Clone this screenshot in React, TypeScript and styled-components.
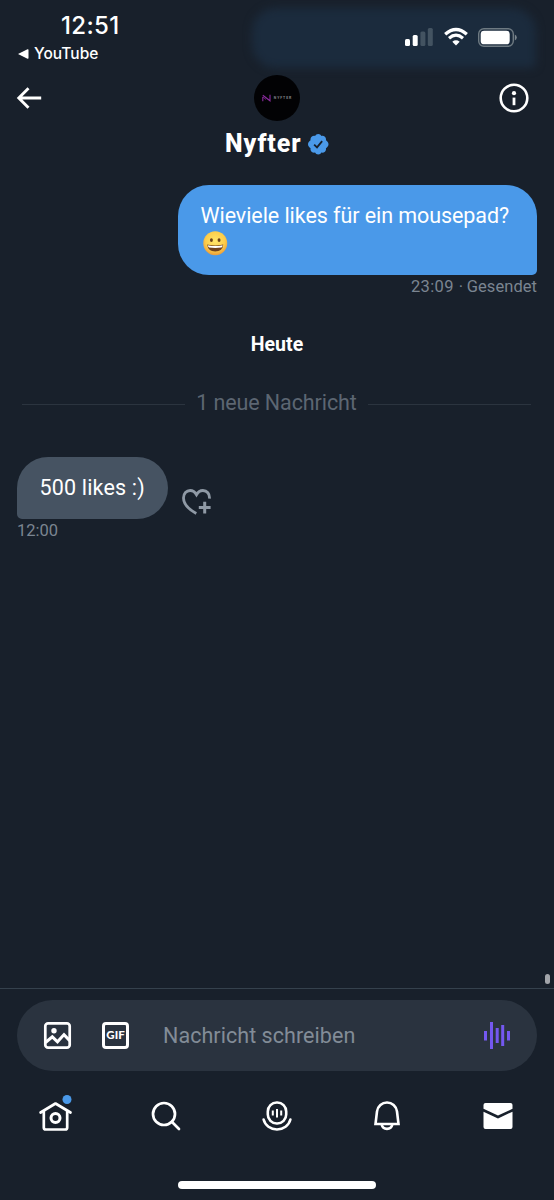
import React from "react";
import styled, { createGlobalStyle } from "styled-components";

const GlobalStyle = createGlobalStyle`
  * { box-sizing: border-box; }
  body { margin: 0; background: #18202b; }
  svg { display: block; flex: none; overflow: visible; }
`;

const Screen = styled.main`
  position: relative;
  display: flex;
  flex-direction: column;
  width: 554px;
  height: 1200px;
  overflow: hidden;
  background: #18202b;
  color: #fff;
  font-family: Roboto, "Liberation Sans", sans-serif;
`;

const Glow = styled.div`
  position: absolute;
  top: 8px;
  left: 252px;
  width: 284px;
  height: 60px;
  border-radius: 24px 24px 6px 24px;
  background: #1b2b3d;
  filter: blur(4px);
`;

const Text = styled.span<{ $size: number; $track?: number; $weight?: number; $color?: string }>`
  font-size: ${(p) => p.$size}px;
  letter-spacing: ${(p) => p.$track ?? 0}px;
  font-weight: ${(p) => p.$weight ?? 400};
  color: ${(p) => p.$color ?? "#fff"};
  white-space: nowrap;
`;

const GifLabel = styled(Text)`
  font-family: Lato, sans-serif;
  line-height: 1;
`;

const StatusBar = styled.header`
  position: relative;
  display: flex;
  justify-content: space-between;
  height: 70px;
  padding: 12px 37px 0 18px;
  font-family: Inter, sans-serif;
`;

const Clock = styled.div`
  display: flex;
  flex-direction: column;
`;

const Time = styled.div`
  height: 28px;
  padding-left: 43px;
  line-height: 28px;
`;

const BackToApp = styled.div`
  display: flex;
  align-items: center;
  gap: 5px;
  height: 27px;
  line-height: 27px;
`;

const Indicators = styled.div`
  display: flex;
  align-items: center;
  gap: 10.5px;
  height: 50px;
`;

const Header = styled.div`
  position: relative;
  display: grid;
  grid-template-columns: 60px 1fr 60px;
  height: 115px;
  padding: 5px 17px 0 17px;
`;

const HeaderButton = styled.div<{ $end?: boolean }>`
  display: flex;
  align-items: center;
  justify-content: ${(p) => (p.$end ? "flex-end" : "flex-start")};
  height: 46px;
  padding-right: ${(p) => (p.$end ? 8 : 0)}px;
`;

const Profile = styled.div`
  display: flex;
  flex-direction: column;
  align-items: center;
`;

const Avatar = styled.div`
  display: flex;
  align-items: center;
  justify-content: center;
  gap: 3px;
  width: 46px;
  height: 46px;
  border-radius: 50%;
  background: #020204;
`;

const NameRow = styled.div`
  display: flex;
  align-items: center;
  gap: 7px;
  height: 46px;
  line-height: 46px;
`;

const Thread = styled.section`
  display: flex;
  flex-direction: column;
  height: 803px;
  padding: 0 17px;
`;

const Bubble = styled.div<{ $mine?: boolean }>`
  display: flex;
  flex-direction: column;
  align-self: ${(p) => (p.$mine ? "flex-end" : "flex-start")};
  width: ${(p) => (p.$mine ? 359 : 151)}px;
  height: ${(p) => (p.$mine ? 89.5 : 62.5)}px;
  padding: 17px 0 0 22.5px;
  border-radius: ${(p) => (p.$mine ? "31px 31px 5px 31px" : "31px 31px 31px 5px")};
  background: ${(p) => (p.$mine ? "#4a99e9" : "#465362")};
  line-height: 28px;
`;

const Emoji = styled.div`
  padding: 1px 0 0 2px;
`;

const Meta = styled.div<{ $mine?: boolean }>`
  display: flex;
  justify-content: ${(p) => (p.$mine ? "flex-end" : "flex-start")};
  height: 24px;
  line-height: 24px;
`;

const Dot = styled.span`
  width: 13px;
  padding-left: 5px;
  color: #7b8591;
  font-size: 16.5px;
`;

const Day = styled.div`
  margin-top: 34px;
  height: 24px;
  line-height: 24px;
  text-align: center;
`;

const Unread = styled.div`
  display: flex;
  align-items: center;
  gap: 11px;
  height: 28px;
  margin: 32px 6px 40px 5px;
  line-height: 28px;
`;

const Rule = styled.div`
  flex: 1;
  height: 1px;
  margin-top: 4px;
  background: #2b343f;
`;

const Incoming = styled.div`
  display: flex;
  align-items: flex-end;
  gap: 14px;
`;

const Reaction = styled.div`
  padding-bottom: 3px;
`;

const ScrollThumb = styled.div`
  position: absolute;
  top: 974px;
  left: 545px;
  width: 5px;
  height: 10px;
  border-radius: 3px;
  background: #a2a5aa;
`;

const Composer = styled.footer`
  display: flex;
  flex-direction: column;
  height: 212px;
  border-top: 1px solid #35414d;
  padding: 10.5px 17px 0;
`;

const Field = styled.div`
  display: flex;
  align-items: center;
  height: 71px;
  padding: 0 26px 0 27px;
  border-radius: 36px;
  background: #2a333f;
`;

const GifBox = styled.div`
  display: flex;
  align-items: center;
  justify-content: center;
  width: 27px;
  height: 27px;
  margin: 0 34px 0 31px;
  border: 3px solid #fff;
  border-radius: 4px;
`;

const Placeholder = styled.div`
  flex: 1;
`;

const TabBar = styled.nav`
  display: flex;
  justify-content: space-between;
  align-items: center;
  height: 90px;
  padding: 0 22px 0 21px;
`;

const Tab = styled.div`
  display: flex;
  align-items: center;
  justify-content: center;
  width: 34px;
  height: 40px;
`;

const HomeIndicator = styled.div`
  align-self: center;
  width: 198px;
  height: 7.5px;
  margin-top: 20.5px;
  border-radius: 4px;
  background: #fff;
`;

const Signal = () => (
  <svg width="28" height="18" viewBox="0 0 28 18" fill="#fff">
    <rect x="0" y="11" width="5" height="7" rx="1.5" />
    <rect x="7.7" y="7" width="5" height="11" rx="1.5" />
    <rect x="15.4" y="3.5" width="5" height="14.5" rx="1.5" fill="#435361" />
    <rect x="22.8" y="0" width="5" height="18" rx="1.5" fill="#435361" />
  </svg>
);

const Wifi = () => (
  <svg width="24" height="18" viewBox="0 0 24 18" fill="none" stroke="#fff">
    <path d="M1.2 6.2Q12-3.2 22.8 6.2" strokeWidth="3.3" />
    <path d="M5 10.2q7-6 14 0" strokeWidth="3.1" />
    <path d="M12 17.6l-3.7-3.8q3.7-2.9 7.4 0z" fill="#fff" stroke="none" />
  </svg>
);

const Battery = () => (
  <svg width="39" height="19" viewBox="0 0 39 19">
    <rect x=".7" y=".7" width="34.6" height="17.6" rx="5.2" fill="none" stroke="#6e7a82" strokeWidth="1.4" />
    <rect x="2.7" y="2.7" width="29" height="13.6" rx="3.4" fill="#fff" />
    <path d="M36.8 6.5q2 .8 2 3t-2 3z" fill="#7c868d" />
  </svg>
);

const BackArrow = () => (
  <svg width="25" height="22" viewBox="0 0 25 22" fill="none" stroke="#fff" strokeWidth="2.9">
    <path d="M24.2 11H2M11.5 1.2L1.8 11l9.7 9.8" />
  </svg>
);

const Info = () => (
  <svg width="30" height="30" viewBox="0 0 30 30">
    <circle cx="15" cy="15" r="13.3" fill="none" stroke="#fff" strokeWidth="2.6" />
    <circle cx="15" cy="10.2" r="2.1" fill="#fff" />
    <rect x="13.6" y="14.6" width="2.8" height="7.6" fill="#fff" />
  </svg>
);

const Verified = () => (
  <svg width="20.5" height="20.5" viewBox="0 0 20 20">
    <path
      fill="#4a99e9"
      d="M10 0c1.4 0 2.5.8 3.1 1.9 1.200-.3 2.500 0 3.400.9.9.9 1.300 2.200 1 3.400C18.800 6.900 20 8.500 20 10s-1.200 3.100-2.500 3.800c.3 1.200-.1 2.500-1 3.400-.9.9-2.200 1.200-3.400.9C12.500 19.200 11.400 20 10 20s-2.500-.8-3.100-1.900c-1.200.3-2.500 0-3.400-.9-.9-.9-1.300-2.200-1-3.400C1.200 13.100 0 11.500 0 10s1.200-3.100 2.500-3.800c-.3-1.200.1-2.500 1-3.400.9-.9 2.200-1.200 3.400-.9C7.500.8 8.600 0 10 0z"
    />
    <path d="M6 10.300l2.800 2.700L13.800 7" fill="none" stroke="#18202b" strokeWidth="1.8" />
  </svg>
);

const LogoMark = () => (
  <svg width="9" height="8" viewBox="0 0 9 8" fill="none" stroke="#8b2b9e" strokeWidth="1.1">
    <path d="M.8 7.200V3M.8 1.200L8 6.800V.8" />
    <path d="M.8 3l3.200 2.500" strokeWidth=".7" />
  </svg>
);

const Grin = () => (
  <svg width="24.5" height="24.5" viewBox="0 0 25 25" role="img" aria-label="😀">
    <defs>
      <radialGradient id="face" cx=".5" cy=".4" r=".62">
        <stop offset="0" stopColor="#ffe569" />
        <stop offset=".65" stopColor="#fdcd4a" />
        <stop offset="1" stopColor="#e9983a" />
      </radialGradient>
    </defs>
    <circle cx="12.5" cy="12.5" r="12.2" fill="url(#face)" />
    <ellipse cx="8.600" cy="9.300" rx="1.500" ry="2" fill="#6b4218" />
    <ellipse cx="16.400" cy="9.300" rx="1.500" ry="2" fill="#6b4218" />
    <path d="M4.300 13.900q8.200 2 16.400 0-.7 7-8.200 7t-8.200-7z" fill="#71421c" />
    <path d="M5 14.500q7.500 1.700 15 0-.1 2.100-1.200 2.400-6.300 1-12.600 0Q5.100 16.600 5 14.500z" fill="#fff" />
  </svg>
);

const HeartPlus = () => (
  <svg width="30" height="27" viewBox="0 0 30 27" fill="none" stroke="#8f99a5" strokeWidth="2.800">
    <path d="M14.300 24.500C7 20.500 1.500 14.500 1.500 9c0-4.500 3-7.500 6.600-7.500 3 0 5 1.700 6.400 4.200 1.400-2.500 3.400-4.200 6.400-4.200 4 0 7 3.300 6.500 8.200" />
    <path d="M22.700 12.700v11.800M16.800 18.600h11.800" strokeWidth="3" />
  </svg>
);

const Photo = () => (
  <svg width="27" height="27" viewBox="0 0 27 27" fill="none" stroke="#fff" strokeWidth="2.700">
    <rect x="1.300" y="1.300" width="24.400" height="24.400" rx="2.800" />
    <circle cx="10" cy="8.800" r="2.700" fill="#fff" stroke="none" />
    <path d="M1.500 20.500l6.800-5.700 5.200 5 6.500-7.200 5.700 6" strokeWidth="3" />
  </svg>
);

const Voice = () => (
  <svg width="27" height="27" viewBox="0 0 27 27" fill="#7458f0">
    <rect x="0" y="9" width="3" height="9.500" />
    <rect x="6" y="0" width="3" height="27" />
    <rect x="11.700" y="6" width="3" height="15" />
    <rect x="17.200" y="3" width="3" height="21" />
    <rect x="23" y="9" width="3" height="9.500" />
  </svg>
);

const HomeIcon = () => (
  <svg width="34" height="34" viewBox="0 0 34 34" fill="none" stroke="#fff" strokeWidth="2.700">
    <path d="M2.600 13.500L17.500 4.500l15 9" strokeLinecap="round" strokeLinejoin="round" />
    <path d="M5.800 12v16.500q0 2 2 2h19.400q2 0 2-2V12" />
    <circle cx="17.500" cy="19" r="4.500" strokeWidth="3" />
    <circle cx="29" cy="0.500" r="4.500" fill="#4a99e9" stroke="none" />
  </svg>
);

const SearchIcon = () => (
  <svg width="30" height="30" viewBox="0 0 30 30" fill="none" stroke="#fff" strokeWidth="2.700">
    <circle cx="13" cy="13" r="11" />
    <path d="M20.800 20.800l7.200 7.200" strokeLinecap="round" />
  </svg>
);

const SpacesIcon = () => (
  <svg width="30" height="30" viewBox="0 0 30 30" fill="none" stroke="#fff" strokeWidth="2.600">
    <rect x="5.800" y="1.500" width="18.400" height="21" rx="9" />
    <path d="M1.600 18.500c1.500 6 7 10 13.400 10s11.900-4 13.400-10" strokeLinecap="round" />
    <path d="M10.800 9.500v5M15 8v8.500M19.200 9.500v5" strokeWidth="2" />
  </svg>
);

const BellIcon = () => (
  <svg width="28" height="30" viewBox="0 0 28 30" fill="none" stroke="#fff" strokeWidth="2.600">
    <path d="M2.500 23L4 10.500C4.700 5 9 1.500 14 1.500s9.300 3.500 10 9L25.500 23z" />
    <path d="M8.700 23.500a5.400 5.400 0 0 0 10.600 0" />
  </svg>
);

const MailIcon = () => (
  <svg width="30" height="28" viewBox="0 0 30 28" fill="#fff">
    <path d="M.5 6.800V3q0-2 2-2h25q2 0 2 2v3.800L15 13.500z" />
    <path d="M.5 9.700L15 16.500l14.500-6.800V25q0 2-2 2h-25q-2 0-2-2z" />
  </svg>
);

const tabs = [HomeIcon, SearchIcon, SpacesIcon, BellIcon, MailIcon];

export default function App() {
  return (
    <Screen>
      <GlobalStyle />
      <Glow />
      <StatusBar>
        <Clock>
          <Time><Text $size={24} $weight={500} $track={0.35}>12:51</Text></Time>
          <BackToApp>
            <svg width="11" height="10" viewBox="0 0 11 10" fill="#fff"><path d="M0 5L9.500.3q1-.3 1 .7v8q0 1-1 .7z" /></svg>
            <Text $size={15.5} $weight={500}>YouTube</Text>
          </BackToApp>
        </Clock>
        <Indicators><Signal /><Wifi /><Battery /></Indicators>
      </StatusBar>
      <Header>
        <HeaderButton><BackArrow /></HeaderButton>
        <Profile>
          <Avatar>
            <LogoMark />
            <Text $size={3.5} $weight={700} $track={0.9} $color="#85858a">NYFTER</Text>
          </Avatar>
          <NameRow>
            <Text $size={25} $weight={800} $track={0.9}>Nyfter</Text>
            <Verified />
          </NameRow>
        </Profile>
        <HeaderButton $end><Info /></HeaderButton>
      </Header>
      <Thread>
        <Bubble $mine>
          <Text $size={21.5} $track={-0.07}>Wieviele likes für ein mousepad?</Text>
          <Emoji><Grin /></Emoji>
        </Bubble>
        <Meta $mine>
          <Text $size={16.5} $track={0.35} $color="#7b8591">23:09</Text>
          <Dot>·</Dot>
          <Text $size={16.5} $track={0.05} $color="#7b8591">Gesendet</Text>
        </Meta>
        <Day><Text $size={19.5} $weight={700}>Heute</Text></Day>
        <Unread>
          <Rule />
          <Text $size={21.5} $track={-0.1} $color="#5c6672">1 neue Nachricht</Text>
          <Rule />
        </Unread>
        <Incoming>
          <Bubble><Text $size={21.5} $track={0.17}>500 likes :)</Text></Bubble>
          <Reaction><HeartPlus /></Reaction>
        </Incoming>
        <Meta><Text $size={16.5} $color="#7b8591">12:00</Text></Meta>
      </Thread>
      <ScrollThumb />
      <Composer>
        <Field>
          <Photo />
          <GifBox><GifLabel $size={11.5} $weight={900}>GIF</GifLabel></GifBox>
          <Placeholder><Text $size={21.5} $track={0.05} $color="#828c97">Nachricht schreiben</Text></Placeholder>
          <Voice />
        </Field>
        <TabBar>
          {tabs.map((Icon, i) => (
            <Tab key={i}><Icon /></Tab>
          ))}
        </TabBar>
        <HomeIndicator />
      </Composer>
    </Screen>
  );
}
